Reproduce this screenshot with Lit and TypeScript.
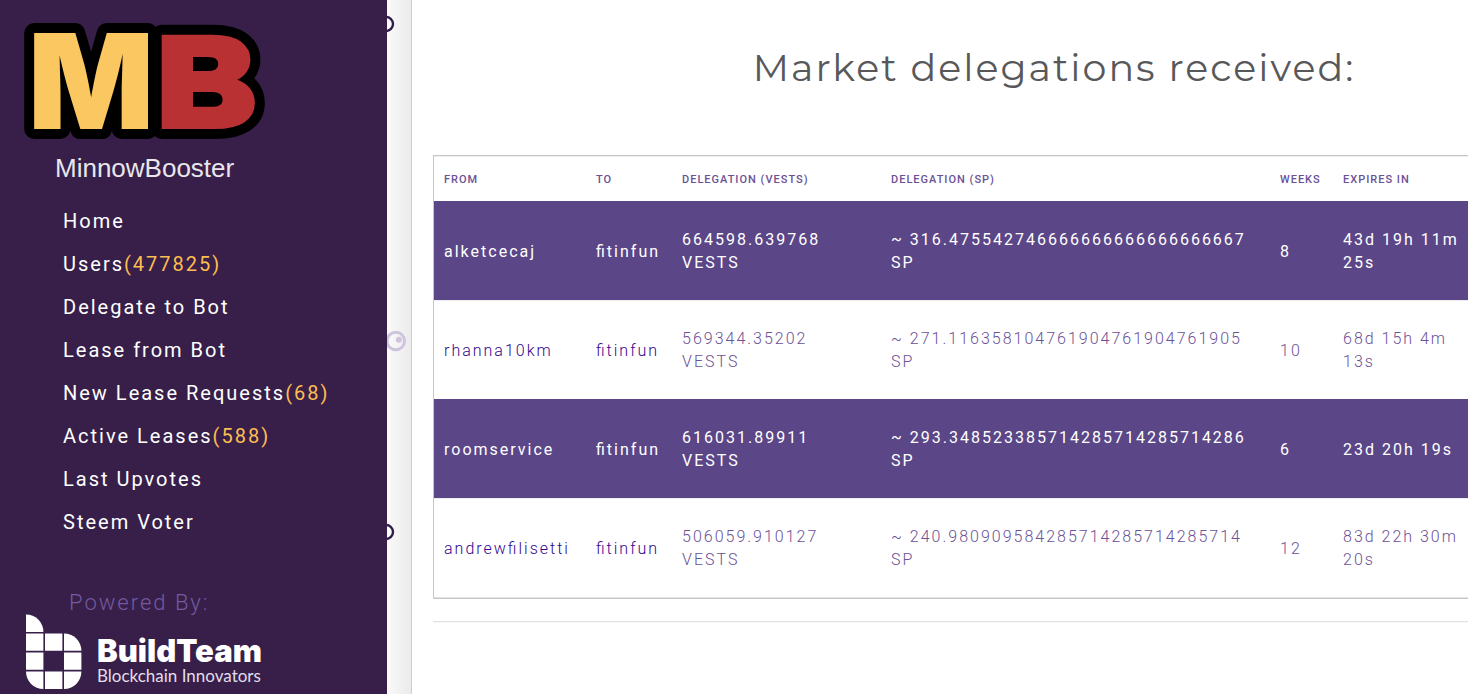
import { LitElement, html, css, svg } from "lit";
import { customElement } from "lit/decorators.js";

interface NavItem {
  label: string;
  count?: number;
}

interface Delegation {
  from: string;
  to: string;
  vests: string;
  sp: string;
  weeks: number;
  expires: string;
}

const NAV: NavItem[] = [
  { label: "Home" },
  { label: "Users", count: 477825 },
  { label: "Delegate to Bot" },
  { label: "Lease from Bot" },
  { label: "New Lease Requests", count: 68 },
  { label: "Active Leases", count: 588 },
  { label: "Last Upvotes" },
  { label: "Steem Voter" },
];

const DELEGATIONS: Delegation[] = [
  { from: "alketcecaj", to: "fitinfun", vests: "664598.639768", sp: "316.475542746666666666666666667", weeks: 8, expires: "43d 19h 11m 25s" },
  { from: "rhanna10km", to: "fitinfun", vests: "569344.35202", sp: "271.116358104761904761904761905", weeks: 10, expires: "68d 15h 4m 13s" },
  { from: "roomservice", to: "fitinfun", vests: "616031.89911", sp: "293.348523385714285714285714286", weeks: 6, expires: "23d 20h 19s" },
  { from: "andrewfilisetti", to: "fitinfun", vests: "506059.910127", sp: "240.980909584285714285714285714", weeks: 12, expires: "83d 22h 30m 20s" },
];

@customElement("mb-sidebar")
class MbSidebar extends LitElement {
  static styles = css`
    :host {
      display: block;
      box-sizing: border-box;
      background: #371f4a;
      color: #fff;
      font-family: Roboto, sans-serif;
      letter-spacing: 2px;
    }
    .brand {
      display: block;
      padding: 15px 0 0 17px;
      color: #fff;
      text-decoration: none;
      letter-spacing: 0;
    }
    .brand svg {
      display: block;
      overflow: visible;
    }
    .mark {
      stroke: #000;
      stroke-width: 20px;
      stroke-linejoin: round;
      paint-order: stroke;
      font-weight: 900;
    }
    .m {
      fill: #fac760;
      font-family: Inter, sans-serif;
      font-size: 132px;
    }
    .b {
      fill: #b93132;
      font-family: Montserrat, Inter, sans-serif;
      font-size: 135px;
    }
    .name {
      font-family: "Liberation Sans", Arial, sans-serif;
      font-size: 26px;
      line-height: 30px;
      padding-left: 38px;
      margin-top: 6px;
      color: #e9e6ec;
    }
    ul {
      list-style: none;
      margin: 17px 0 0;
      padding: 0 0 0 63px;
    }
    li a {
      display: block;
      color: #fff;
      text-decoration: none;
      font-size: 20px;
      line-height: 43px;
      white-space: nowrap;
    }
    .count {
      color: #fdbd4f;
    }
    .powered {
      margin: 44px 0 0;
      padding-left: 69px;
      font-size: 22px;
      line-height: 30px;
      font-weight: 300;
      color: #745a9f;
    }
    .team {
      display: flex;
      gap: 15px;
      padding: 0 0 4px 26px;
      margin-top: -4px;
      color: #fff;
      text-decoration: none;
      letter-spacing: 0;
    }
    .team svg {
      flex: none;
    }
    .words {
      padding-top: 22px;
      white-space: nowrap;
    }
    .team-name {
      display: block;
      font-family: Inter, sans-serif;
      font-weight: 900;
      font-size: 31px;
      line-height: 30px;
    }
    .tagline {
      display: block;
      font-family: Lato, sans-serif;
      font-size: 17px;
      line-height: 20px;
      color: #e3deea;
    }
  `;

  render() {
    return html`
      <a class="brand" href="#">
        <svg width="252" height="132" viewBox="0 0 252 132" role="img" aria-label="MB">
          <g class="mark">
            <text class="m" x="11" y="114">M</text>
            <text class="b" x="137" y="114">B</text>
          </g>
        </svg>
        <div class="name">MinnowBooster</div>
      </a>
      <nav>
        <ul>
          ${NAV.map(
            (n) => html`<li><a href="#">${n.label}${n.count !== undefined ? html`<span class="count">(${n.count})</span>` : ""}</a></li>`
          )}
        </ul>
      </nav>
      <p class="powered">Powered By:</p>
      <a class="team" href="#">
        <svg width="56" height="76" viewBox="0 0 56 76" aria-hidden="true" fill="#fff">
          <path d="M0 0.5A17.4 17.4 0 0 1 17.4 17.9H0z" />
          <path d="M0 19.4h17.4v17.4H0zM19 19.4h17.4v17.4H19z" />
          <path d="M38 19.4A17.4 17.4 0 0 1 55.4 36.8H38z" />
          <path d="M0 38.4h17.4v17.4H0zM38 38.4h17.4v17.4H38z" />
          <path d="M0 57.6h17.4V75A17.4 17.4 0 0 1 0 57.6zM19 57.6h17.4V75H19zM38 57.6h17.4A17.4 17.4 0 0 1 38 75z" />
        </svg>
        <span class="words">
          <span class="team-name">BuildTeam</span>
          <span class="tagline">Blockchain Innovators</span>
        </span>
      </a>
    `;
  }
}

@customElement("mb-delegations")
class MbDelegations extends LitElement {
  static styles = css`
    :host {
      display: block;
      font-family: Roboto, sans-serif;
      font-weight: 300;
      font-size: 16px;
      line-height: 23px;
      letter-spacing: 2px;
      color: #6b5196;
    }
    table {
      width: 100%;
      table-layout: fixed;
      border: 1px solid #c5c8c8;
      border-spacing: 0;
    }
    .c-from { width: 152px; }
    .c-to { width: 86px; }
    .c-vests { width: 209px; }
    .c-sp { width: 389px; }
    .c-weeks { width: 63px; }
    .c-expires { width: 148px; }
    th {
      padding: 11px 10px 10px;
      text-align: left;
      text-transform: uppercase;
      font-size: 11px;
      font-weight: 500;
      letter-spacing: 1px;
      border-top: 1px solid #eee;
    }
    th.expires {
      white-space: nowrap;
    }
    td {
      padding: 26px 10px;
      vertical-align: middle;
      border-top: 1px solid #eee;
    }
    tbody tr:last-child td {
      border-bottom: 1px solid #e4e4e4;
    }
    tr.dark td {
      background: #5b4687;
      border-top-color: #5b4687;
      color: #fff;
      font-weight: 400;
    }
    a {
      color: #32048c;
      text-decoration: none;
      font-feature-settings: "liga" 1;
    }
    tr.dark a {
      color: #fff;
    }
  `;

  render() {
    return html`
      <table>
        <colgroup>
          <col class="c-from" /><col class="c-to" /><col class="c-vests" /><col class="c-sp" />
          <col class="c-weeks" /><col class="c-expires" /><col />
        </colgroup>
        <thead>
          <tr>
            <th>From</th><th>To</th><th>Delegation (Vests)</th><th>Delegation (SP)</th>
            <th>Weeks</th><th class="expires">Expires in</th><th></th>
          </tr>
        </thead>
        <tbody>
          ${DELEGATIONS.map(
            (d, i) => html`<tr class=${i % 2 === 0 ? "dark" : "light"}>
              <td><a href="#">${d.from}</a></td>
              <td><a href="#">${d.to}</a></td>
              <td>${d.vests}<br />VESTS</td>
              <td>~ ${d.sp} SP</td>
              <td>${d.weeks}</td>
              <td>${d.expires}</td>
              <td></td>
            </tr>`
          )}
        </tbody>
      </table>
    `;
  }
}

@customElement("app-root")
class AppRoot extends LitElement {
  static styles = css`
    :host {
      display: grid;
      grid-template-columns: 387px 25px minmax(0, 1fr);
      min-height: 100vh;
      overflow: hidden;
      background: #fff;
    }
    .strip {
      box-sizing: border-box;
      background: linear-gradient(to right, #fafafa, #ebebeb);
      border-right: 1px solid #d3cbe4;
    }
    .strip svg {
      display: block;
    }
    main {
      padding-left: 21px;
    }
    .content {
      width: 120%;
    }
    h1 {
      margin: 0;
      padding: 44px 0 63px;
      text-align: center;
      font-family: Montserrat, Inter, sans-serif;
      font-weight: 400;
      font-size: 38px;
      line-height: 48px;
      letter-spacing: 2px;
      color: #58585a;
    }
    hr {
      margin: 22px 0 0;
      border: 0;
      border-top: 1px solid #e1e1e1;
      border-bottom: 1px solid #f8f8f8;
    }
  `;

  render() {
    return html`
      <mb-sidebar></mb-sidebar>
      <div class="strip">
        <svg width="24" height="560" viewBox="0 0 24 560" aria-hidden="true" fill="none">
          ${[24, 532].map((y) => svg`<circle cx="-1" cy=${y} r="7" fill="#fff" stroke="#2f1c4d" stroke-width="2.4" />`)}
          <circle cx="8.8" cy="341" r="8.8" stroke="#cfc4de" stroke-width="3" />
          <circle cx="11.8" cy="339.8" r="3" fill="#cfc4de" />
        </svg>
      </div>
      <main>
        <div class="content">
          <h1>Market delegations received:</h1>
          <mb-delegations></mb-delegations>
          <hr />
        </div>
      </main>
    `;
  }
}
